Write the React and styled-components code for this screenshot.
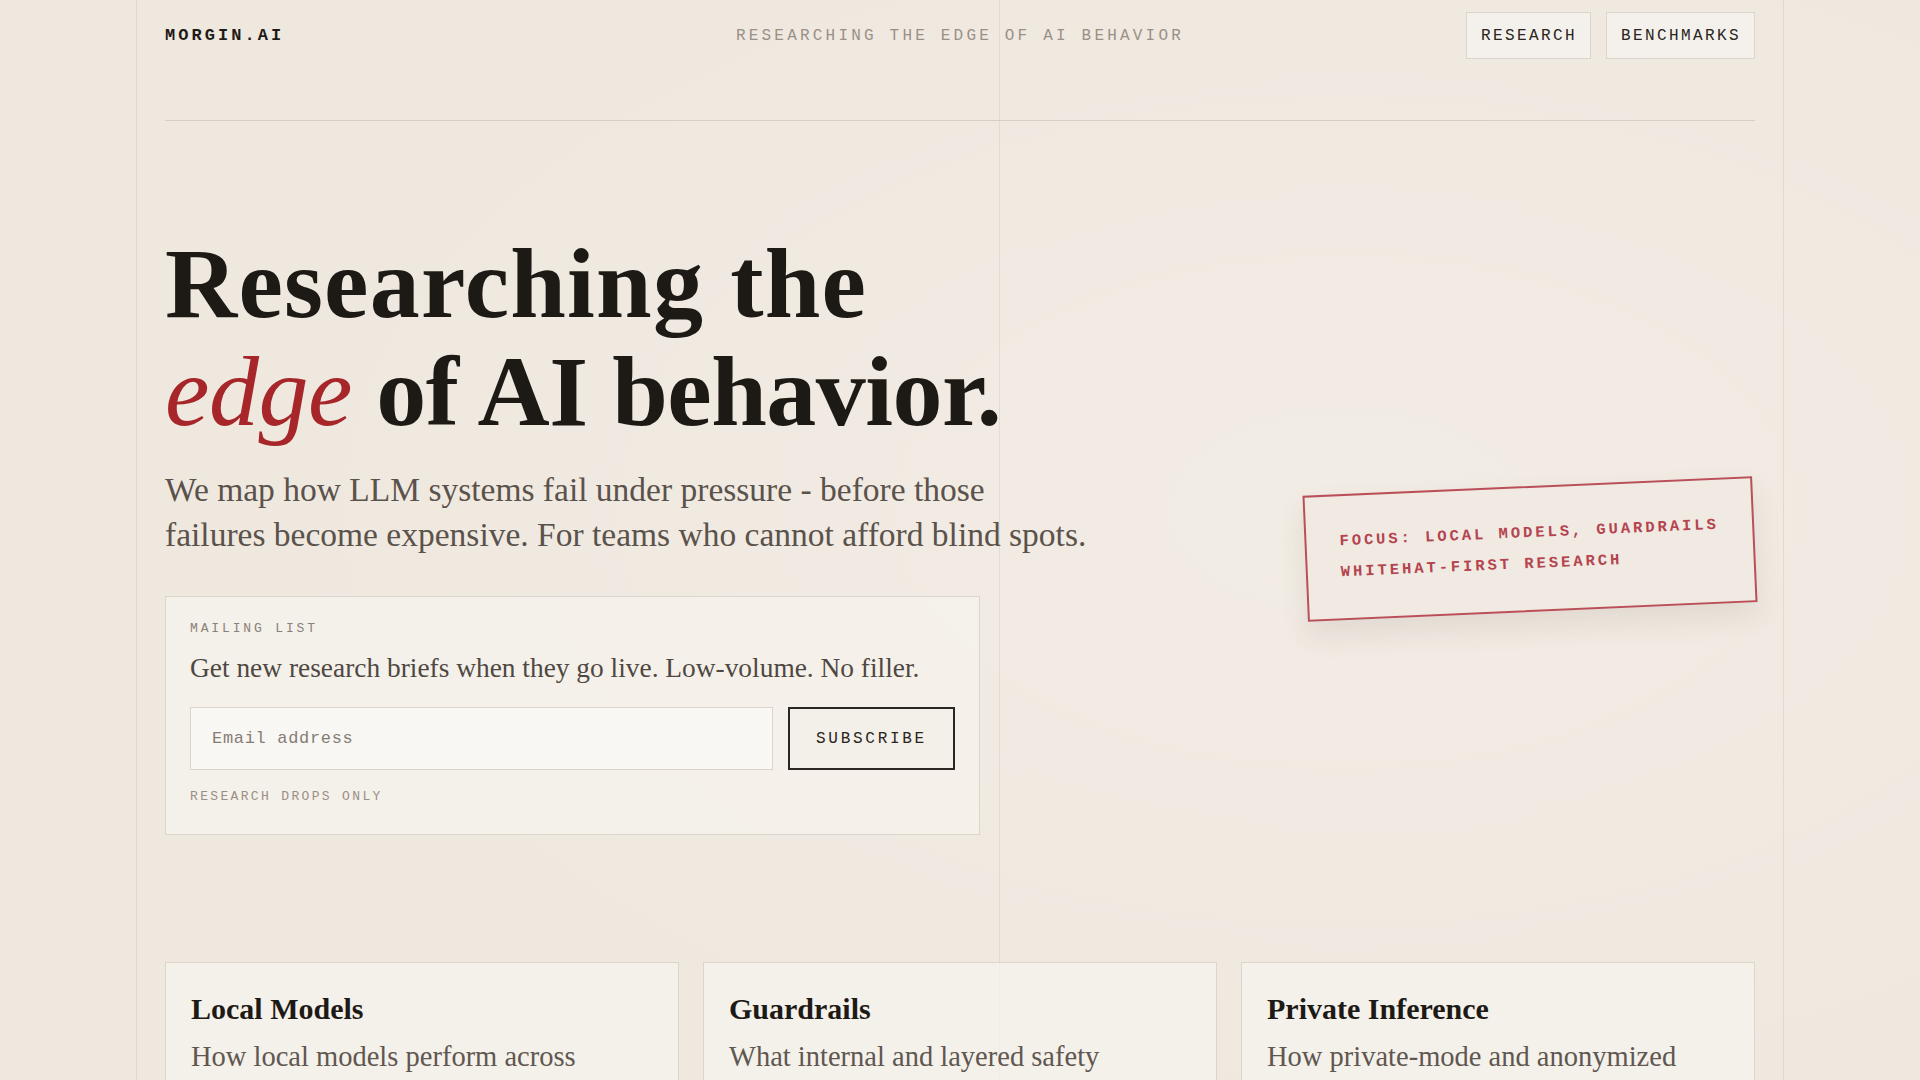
import React from "react";
import styled, { createGlobalStyle } from "styled-components";

const GlobalStyle = createGlobalStyle`
  html, body {
    margin: 0;
    padding: 0;
    background: #efe8df;
  }
  body {
    font-family: "Liberation Serif", "Times New Roman", serif;
    color: #1d1a16;
    -webkit-font-smoothing: antialiased;
  }
  * { box-sizing: border-box; }
`;

const mono = `"Liberation Mono", "DejaVu Sans Mono", monospace`;
const serif = `"Liberation Serif", "Times New Roman", serif`;

const Page = styled.div`
  min-height: 100vh;
  background:
    radial-gradient(ellipse at 70% 40%, rgba(255, 255, 255, 0.18), transparent 60%),
    #efe8df;
  overflow: hidden;
`;

const Frame = styled.div`
  width: 1648px;
  margin: 0 auto;
  padding: 0 28px 80px;
  border-left: 1px solid rgba(150, 130, 110, 0.16);
  border-right: 1px solid rgba(150, 130, 110, 0.16);
  background-image: linear-gradient(
    to right,
    transparent 862px,
    rgba(150, 130, 110, 0.14) 862px,
    rgba(150, 130, 110, 0.14) 863px,
    transparent 863px
  );
`;

const Header = styled.header`
  display: grid;
  grid-template-columns: 1fr auto 1fr;
  align-items: center;
  padding: 12px 0 61px;
  border-bottom: 1px solid #d8cfc4;
`;

const Brand = styled.div`
  font-family: ${mono};
  font-size: 17px;
  font-weight: 700;
  letter-spacing: 0.18em;
  color: #1f1b17;
`;

const Tagline = styled.div`
  font-family: ${mono};
  font-size: 16px;
  letter-spacing: 0.2em;
  color: #9a9087;
  text-align: center;
`;

const Nav = styled.nav`
  display: flex;
  gap: 15px;
  justify-self: end;
`;

const NavButton = styled.a`
  display: flex;
  align-items: center;
  height: 47px;
  padding: 0 13px 0 14px;
  font-family: ${mono};
  font-size: 16px;
  letter-spacing: 0.15em;
  color: #2a2520;
  background: #f4f1ec;
  border: 1px solid #ddd5cb;
  text-decoration: none;
`;

const Hero = styled.section`
  display: grid;
  grid-template-columns: 1fr auto;
  align-items: center;
  padding-top: 109px;
`;

const HeroMain = styled.div`
  display: flex;
  flex-direction: column;
  align-items: flex-start;
`;

const Title = styled.h1`
  margin: 0;
  font-family: ${serif};
  font-weight: 700;
  font-size: 100px;
  line-height: 108px;
  letter-spacing: -0.005em;
  color: #1d1a16;
`;

const TitleLine = styled.span`
  display: block;
  letter-spacing: ${(p) => p.$spacing || "-0.005em"};
`;

const Accent = styled.em`
  font-style: italic;
  font-weight: 400;
  color: #a7262a;
`;

const Lede = styled.p`
  margin: 21px 0 0;
  font-family: ${serif};
  font-size: 33.5px;
  line-height: 45px;
  color: #5a524b;
  white-space: nowrap;
`;

const SignupCard = styled.div`
  margin-top: 39px;
  width: 815px;
  padding: 22px 24px 27px;
  background: rgba(246, 243, 238, 0.7);
  border: 1px solid #ddd5cb;
  display: flex;
  flex-direction: column;
`;

const Eyebrow = styled.div`
  font-family: ${mono};
  font-size: ${(p) => p.$size || 13}px;
  line-height: 20px;
  letter-spacing: ${(p) => p.$spacing || 0.2}em;
  color: ${(p) => p.$color || "#8a8078"};
`;

const SignupText = styled.div`
  margin-top: 10px;
  font-family: ${serif};
  font-size: 27.4px;
  line-height: 38px;
  color: #4f4842;
`;

const SignupRow = styled.form`
  display: flex;
  gap: 15px;
  margin: 20px 0 17px;
`;

const EmailInput = styled.input`
  flex: 1;
  height: 63px;
  padding: 0 21px;
  font-family: ${mono};
  font-size: 17px;
  letter-spacing: 0.04em;
  color: #2a2520;
  background: #f9f7f3;
  border: 1px solid #dcd4ca;
  outline: none;
  &::placeholder {
    color: #857d75;
  }
`;

const SubscribeButton = styled.button`
  width: 167px;
  height: 63px;
  font-family: ${mono};
  font-size: 16px;
  letter-spacing: 0.17em;
  color: #2a2520;
  background: #f3efe9;
  border: 2px solid #2b2621;
  cursor: pointer;
`;

const Stamp = styled.div`
  margin-top: 32px;
  padding: 30px 33px 30px 33px;
  border: 2px solid rgba(176, 52, 62, 0.85);
  background: #f0eae3;
  box-shadow: 0 14px 28px rgba(90, 70, 50, 0.1);
  transform: rotate(-2.5deg);
  font-family: ${mono};
  font-weight: 700;
  font-size: 15.5px;
  line-height: 31px;
  letter-spacing: 0.19em;
  color: #b4444e;
  white-space: nowrap;
`;

const Features = styled.section`
  display: grid;
  grid-template-columns: repeat(3, 1fr);
  gap: 24px;
  margin-top: 127px;
`;

const FeatureCard = styled.article`
  padding: 28px 25px 32px;
  background: rgba(246, 243, 238, 0.75);
  border: 1px solid #ddd5cb;
`;

const FeatureTitle = styled.h3`
  margin: 0;
  font-family: ${serif};
  font-weight: 700;
  font-size: 30px;
  line-height: 36px;
  color: #1d1a16;
`;

const FeatureText = styled.p`
  margin: 8px 0 0;
  font-family: ${serif};
  font-size: 28.5px;
  line-height: 43px;
  color: #5f5750;
`;

const features = [
  {
    title: "Local Models",
    text: "How local models perform across adversarial prompts, long contexts and quantized builds.",
  },
  {
    title: "Guardrails",
    text: "What internal and layered safety systems catch - and what slips past them.",
  },
  {
    title: "Private Inference",
    text: "How private-mode and anonymized inference setups behave when pushed.",
  },
];

export default function App() {
  return (
    <Page>
      <GlobalStyle />
      <Frame>
        <Header>
          <Brand>MORGIN.AI</Brand>
          <Tagline>RESEARCHING THE EDGE OF AI BEHAVIOR</Tagline>
          <Nav>
            <NavButton href="#">RESEARCH</NavButton>
            <NavButton href="#">BENCHMARKS</NavButton>
          </Nav>
        </Header>

        <Hero>
          <HeroMain>
            <Title>
              <TitleLine $spacing="0.012em">Researching the</TitleLine>
              <TitleLine>
                <Accent>edge</Accent> of AI behavior.
              </TitleLine>
            </Title>
            <Lede>
              We map how LLM systems fail under pressure - before those
              <br />
              failures become expensive. For teams who cannot afford blind spots.
            </Lede>
            <SignupCard>
              <Eyebrow $size={13} $spacing={0.22}>MAILING LIST</Eyebrow>
              <SignupText>
                Get new research briefs when they go live. Low-volume. No filler.
              </SignupText>
              <SignupRow onSubmit={(e) => e.preventDefault()}>
                <EmailInput type="email" placeholder="Email address" />
                <SubscribeButton type="submit">SUBSCRIBE</SubscribeButton>
              </SignupRow>
              <Eyebrow $size={13} $spacing={0.18} $color="#9a8f85">
                RESEARCH DROPS ONLY
              </Eyebrow>
            </SignupCard>
          </HeroMain>
          <Stamp>
            FOCUS: LOCAL MODELS, GUARDRAILS
            <br />
            WHITEHAT-FIRST RESEARCH
          </Stamp>
        </Hero>

        <Features>
          {features.map((f) => (
            <FeatureCard key={f.title}>
              <FeatureTitle>{f.title}</FeatureTitle>
              <FeatureText>{f.text}</FeatureText>
            </FeatureCard>
          ))}
        </Features>
      </Frame>
    </Page>
  );
}
